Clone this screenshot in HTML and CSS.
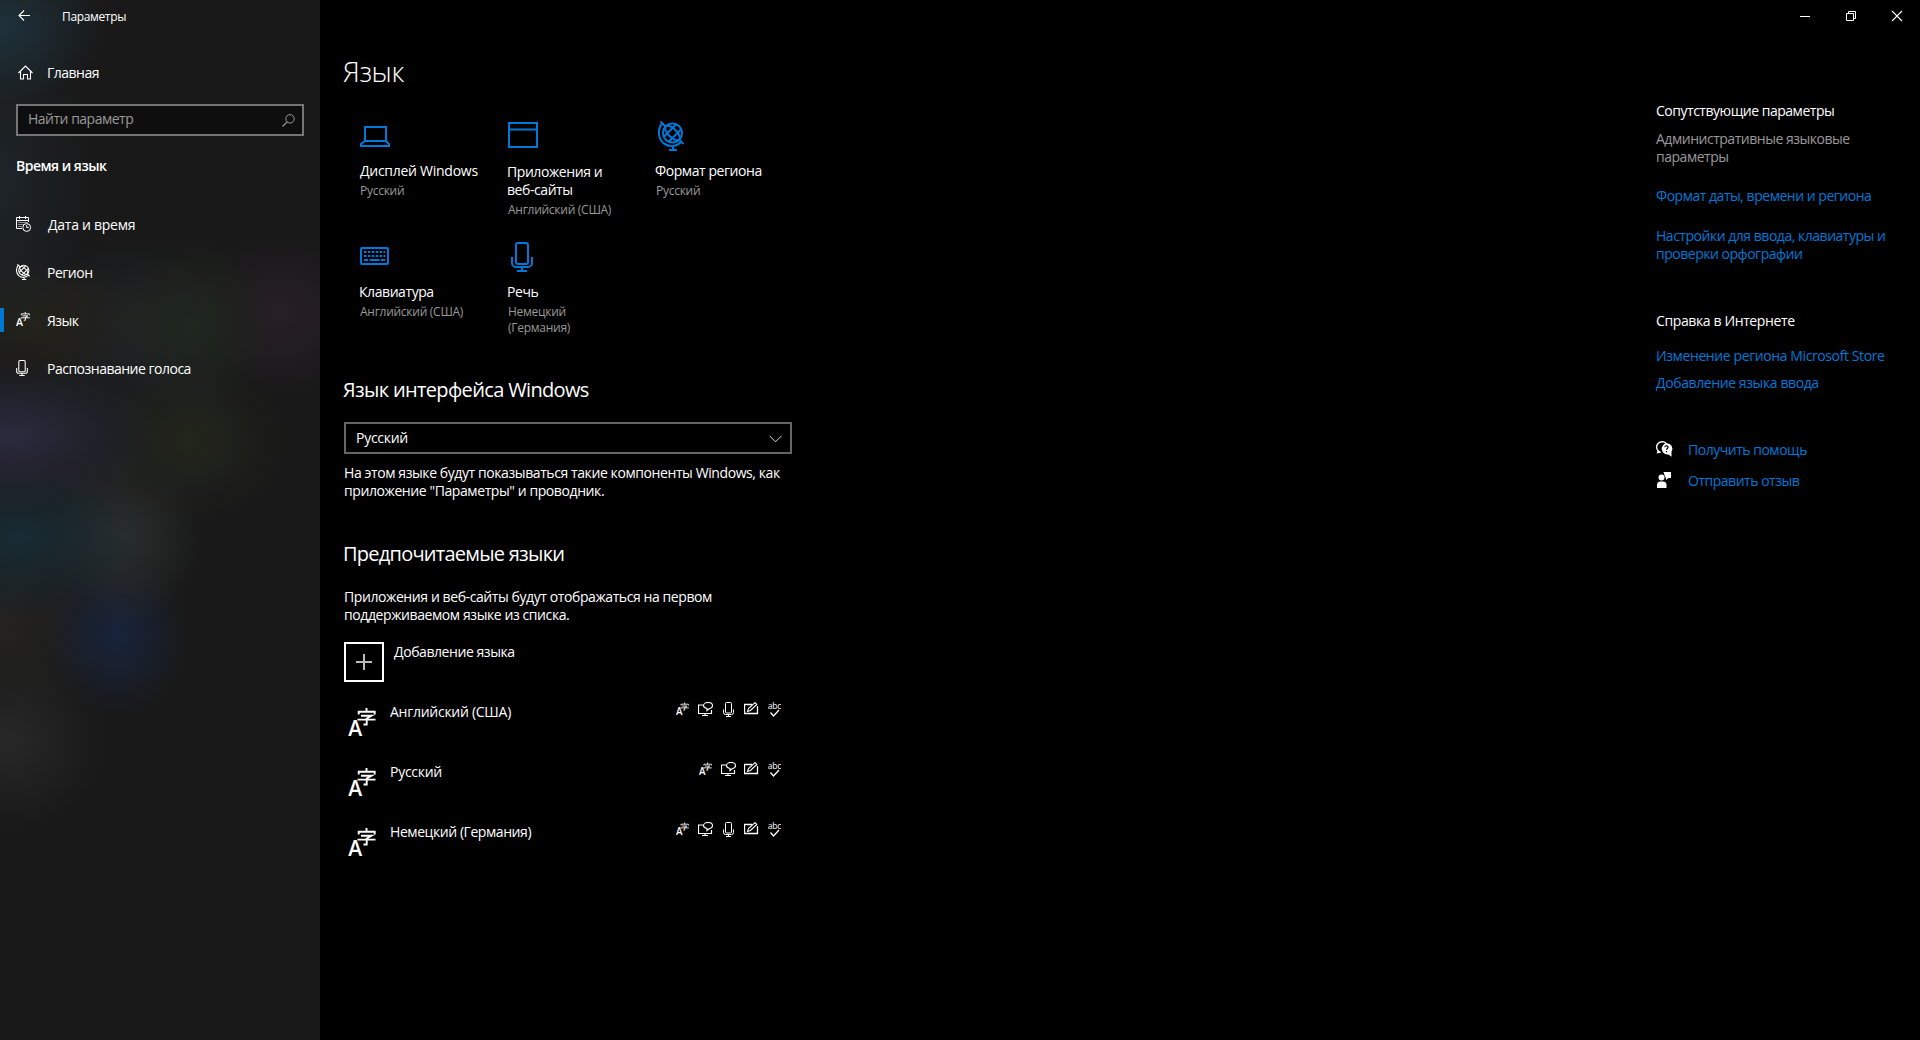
FILE: index.html
```html
<!DOCTYPE html>
<html lang="ru">
<head>
<meta charset="utf-8">
<title>Параметры</title>
<link rel="stylesheet" href="styles.css">
</head>
<body>
<svg class="defs" aria-hidden="true">
  <symbol id="translate" viewBox="0 0 28 28">
    <text class="glyph-a" x="0.200" y="27.500">A</text>
    <path d="M18.5 0v3.5M10.700 6.500V3.700H26.700V6.500M13 7.700H23.500L18.700 10.500V16.500H15.500M9.500 11.600H27.500" fill="none" stroke="currentColor" stroke-width="1.900"/>
  </symbol>
  <symbol id="mic" viewBox="0 0 22 30">
    <rect x="5" y="1" width="12" height="21" rx="2" fill="none" stroke="currentColor" stroke-width="2"/>
    <path d="M1 15v6a4 4 0 0 0 4 4h12a4 4 0 0 0 4-4v-6M11 25v4M6 29h10" fill="none" stroke="currentColor" stroke-width="2"/>
  </symbol>
  <symbol id="globe" viewBox="0 0 26 30">
    <g fill="none" stroke="currentColor" stroke-width="2">
      <circle cx="14.500" cy="12" r="9.500"/>
      <g transform="rotate(-45 14.500 12)"><ellipse cx="14.500" cy="12" rx="4.200" ry="9.500"/><path d="M6 8.500h17M6 15.500h17"/></g>
      <path d="M2.500 .5l5 5M21 18.500l4.500 4.500M3.500 3C-.5 9 0 17 5 21.800c5 4.500 13 4.500 18-.8M15 25v4M11 29h8"/>
    </g>
  </symbol>
  <symbol id="display" viewBox="0 0 15 15">
    <path d="M5 3H.5v8.500h13V8M7 11.500V14M4 13.500h6" fill="none" stroke="currentColor" stroke-width="1.150"/>
    <path d="M10 .5c2.500 0 4.500 1.300 4.500 3S13 6.500 11.500 6.500L9 8.500v-2C6.500 6 5.500 5 5.500 3.500s2-3 4.500-3z" fill="none" stroke="currentColor" stroke-width="1.150"/>
  </symbol>
  <symbol id="pen" viewBox="0 0 15 15">
    <path d="M8 2.500H.5v9h13V4" fill="none" stroke="currentColor" stroke-width="1.300"/>
    <path d="M3.500 9.500l1-3L11 .6l1.800 1.800L6.500 8.500z" fill="none" stroke="currentColor" stroke-width="1.100"/>
  </symbol>
  <symbol id="spell" viewBox="0 0 13 15">
    <text class="glyph-abc" x="-0.300" y="7">abc</text>
    <path d="M2.500 10.500l3 3.500 5.500-6" fill="none" stroke="currentColor" stroke-width="1.300"/>
  </symbol>
</svg>
<div class="window">
  <aside class="side">
    <header class="titlebar">
      <svg class="back" width="12" height="11" viewBox="0 0 12 11"><path d="M12 5.500H.8M6 .5L1 5.500l5 5" fill="none" stroke="#fff" stroke-width="1.100"/></svg>
      <span class="caption">Параметры</span>
    </header>
    <a class="home">
      <svg width="15" height="15" viewBox="0 0 15 15"><path d="M.5 8L7.500 1l7 7M2.500 6.500v7.500h3v-4.500h4v4.500h3V6.500" fill="none" stroke="#fff" stroke-width="1.100"/></svg>
      <span>Главная</span>
    </a>
    <div class="search">
      <span>Найти параметр</span>
      <svg width="13" height="13" viewBox="0 0 13 13"><circle cx="8" cy="4.800" r="4.200" fill="none" stroke="#999"/><path d="M5 8L.5 12.500" stroke="#999" stroke-width="1.100"/></svg>
    </div>
    <h2 class="group">Время и язык</h2>
    <nav>
      <a class="nav-item"><svg width="15" height="16" viewBox="0 0 15 16"><g fill="none" stroke="#fff"><path d="M6 12.500H.5V1.500h12V6M.5 4.500h12M3.500 0v3M9.500 0v3"/><circle cx="10.700" cy="11.500" r="3.900"/><path d="M10.700 9v2.500h2"/></g><path d="M2.500 6.500h9M2.500 8.500h5M2.500 10.500h4" stroke="#fff" stroke-dasharray="1 1"/></svg><span class="loose">Дата и время</span></a>
      <a class="nav-item"><svg width="14" height="16"><use href="#globe"/></svg><span>Регион</span></a>
      <a class="nav-item current"><svg width="14" height="14"><use href="#translate"/></svg><span>Язык</span></a>
      <a class="nav-item"><svg width="12" height="16"><use href="#mic"/></svg><span>Распознавание голоса</span></a>
    </nav>
  </aside>
  <main class="content">
    <h1>Язык</h1>
    <div class="tiles">
      <div class="tile"><div class="pic laptop"><svg width="30" height="21" viewBox="0 0 30 21"><path d="M5 15V1h21v14M5 15h21l3 3v2H1v-2z" fill="none" stroke="currentColor" stroke-width="2"/></svg></div><span class="name loose">Дисплей Windows</span><span class="value">Русский</span></div>
      <div class="tile two-line"><div class="pic apps"><svg width="30" height="26" viewBox="0 0 30 26"><path d="M1 1h28v24H1zM1 7.500h28" fill="none" stroke="currentColor" stroke-width="2"/></svg></div><span class="name">Приложения и<br>веб-сайты</span><span class="value">Английский (США)</span></div>
      <div class="tile"><div class="pic world"><svg width="26" height="30"><use href="#globe"/></svg></div><span class="name">Формат региона</span><span class="value">Русский</span></div>
      <div class="tile"><div class="pic keys"><svg width="29" height="18" viewBox="0 0 29 18"><rect x="1" y="1" width="27" height="16" rx="1" fill="none" stroke="currentColor" stroke-width="2"/><path d="M4 5h21M4 9h21" stroke="currentColor" stroke-width="2" stroke-dasharray="2.500 1.400"/><path d="M4 13h4M9.500 13h10M21 13h4" stroke="currentColor" stroke-width="2"/></svg></div><span class="name">Клавиатура</span><span class="value">Английский (США)</span></div>
      <div class="tile"><div class="pic speech"><svg width="22" height="30"><use href="#mic"/></svg></div><span class="name">Речь</span><span class="value">Немецкий<br>(Германия)</span></div>
    </div>
    <h2 class="section">Язык интерфейса Windows</h2>
    <div class="select"><span class="loose">Русский</span><svg width="13" height="8" viewBox="0 0 13 8"><path d="M.5 .8l6 6 6-6" fill="none" stroke="#ddd"/></svg></div>
    <p class="note">На этом языке будут показываться такие компоненты Windows, как<br>приложение "Параметры" и проводник.</p>
    <h2 class="section preferred">Предпочитаемые языки</h2>
    <p class="note">Приложения и веб-сайты будут отображаться на первом<br>поддерживаемом языке из списка.</p>
    <div class="add"><div class="plus"><svg width="16" height="16" viewBox="0 0 16 16"><path d="M8 0v16M0 8h16" stroke="#bbb" stroke-width="2"/></svg></div><span>Добавление языка</span></div>
    <div class="lang"><svg class="big" width="28" height="28"><use href="#translate"/></svg><span class="loose">Английский (США)</span>
      <div class="features"><svg width="13" height="14"><use href="#translate"/></svg><svg width="15" height="15"><use href="#display"/></svg><svg width="11" height="15"><use href="#mic"/></svg><svg width="15" height="15"><use href="#pen"/></svg><svg width="13" height="15"><use href="#spell"/></svg></div></div>
    <div class="lang"><svg class="big" width="28" height="28"><use href="#translate"/></svg><span class="loose">Русский</span>
      <div class="features"><svg width="13" height="14"><use href="#translate"/></svg><svg width="15" height="15"><use href="#display"/></svg><svg width="15" height="15"><use href="#pen"/></svg><svg width="13" height="15"><use href="#spell"/></svg></div></div>
    <div class="lang"><svg class="big" width="28" height="28"><use href="#translate"/></svg><span>Немецкий (Германия)</span>
      <div class="features"><svg width="13" height="14"><use href="#translate"/></svg><svg width="15" height="15"><use href="#display"/></svg><svg width="11" height="15"><use href="#mic"/></svg><svg width="15" height="15"><use href="#pen"/></svg><svg width="13" height="15"><use href="#spell"/></svg></div></div>
  </main>
  <aside class="related">
    <div class="controls">
      <svg width="10" height="10" viewBox="0 0 10 10"><path d="M0 5.500h10" stroke="#fff"/></svg>
      <svg width="10" height="10" viewBox="0 0 10 10"><path d="M.5 2.500h7v7h-7zM2.500 2.500v-2h7v7h-2" fill="none" stroke="#fff"/></svg>
      <svg width="10" height="10" viewBox="0 0 10 10"><path d="M0 0l10 10M10 0L0 10" stroke="#fff" stroke-width="1.100"/></svg>
    </div>
    <h3>Сопутствующие параметры</h3>
    <p class="muted">Административные языковые<br>параметры</p>
    <a class="link format">Формат даты, времени и региона</a>
    <a class="link input">Настройки для ввода, клавиатуры и<br>проверки орфографии</a>
    <h3 class="help">Справка в Интернете</h3>
    <a class="link store">Изменение региона Microsoft Store</a>
    <a class="link method">Добавление языка ввода</a>
    <a class="action"><svg width="17" height="16" viewBox="0 0 17 16"><path d="M2.500 10.500C-.5 7.500 0 3 3.500 1.300 6.500 0 9.500 1 10.500 3" fill="none" stroke="#fff" stroke-width="1.400"/><path d="M.5 12.500l5-1L2 9zM10.500 2.200a5.500 5.500 0 0 1 5 8.500v5L12.500 13.500a5.500 5.500 0 1 1-2-11.300z" fill="#fff"/><path d="M8.800 6.300c.2-2.200 3.600-1.800 3.200.2-.3 1-1.500 1-1.500 2.300M10.500 10v1.200" fill="none" stroke="#000" stroke-width="1.200"/></svg><span>Получить помощь</span></a>
    <a class="action"><svg width="17" height="16" viewBox="0 0 17 16"><circle cx="5.500" cy="5.500" r="3" fill="#fff"/><path d="M1 16v-3.500a3.500 3.500 0 0 1 3.500-3H7a3.500 3.500 0 0 1 3.500 3V16zM7.500 0H15v6h-2.500l-2.500 2V6L9 4.500z" fill="#fff"/></svg><span>Отправить отзыв</span></a>
  </aside>
</div>
</body>
</html>
```
FILE: styles.css
```css
* { box-sizing: border-box; }
body {
  margin: 0;
  background: #000;
  color: #fff;
  font: 14px/18px "Open Sans", "Noto Sans", sans-serif;
  letter-spacing: -0.43px;
}
h1, h2, h3, p { margin: 0; font-weight: 400; font-size: inherit; }
.defs { position: absolute; width: 0; height: 0; }
.glyph-a { font: 600 21px "Open Sans", sans-serif; fill: currentColor; letter-spacing: 0; }
.glyph-abc { font: 8.5px "Open Sans", sans-serif; fill: currentColor; letter-spacing: -0.2px; }
svg { display: block; flex: none; overflow: visible; }
.loose { letter-spacing: -0.27px; }
.window { display: flex; height: 1040px; overflow: hidden; white-space: nowrap; }

.side {
  width: 320px;
  flex: none;
  letter-spacing: -0.5px;
  background:
    radial-gradient(ellipse 105px 80px at 0 25px, #1f323b, transparent),
    radial-gradient(ellipse 90px 190px at 0 180px, #1d2428, transparent),
    radial-gradient(ellipse 130px 65px at 30px 320px, #242219, transparent),
    radial-gradient(ellipse 85px 85px at 190px 325px, #1f271e, transparent),
    radial-gradient(ellipse 95px 80px at 280px 315px, #271f26, transparent),
    radial-gradient(ellipse 110px 90px at 130px 330px, #202328, transparent),
    radial-gradient(ellipse 150px 75px at 10px 435px, #2a2b3e, transparent),
    radial-gradient(ellipse 95px 80px at 190px 440px, #23261c, transparent),
    radial-gradient(ellipse 130px 80px at 20px 537px, #182c34, transparent),
    radial-gradient(ellipse 80px 90px at 122px 535px, #2c2e2e, transparent),
    radial-gradient(ellipse 70px 80px at 117px 635px, #18243c, transparent),
    radial-gradient(ellipse 110px 90px at 0 630px, #242322, transparent),
    radial-gradient(ellipse 100px 90px at 5px 740px, #282828, transparent),
    #191919;
}
.titlebar { display: flex; height: 32px; padding: 10px 0 0 18px; }
.caption { margin: -1px 0 0 32px; font-size: 12px; line-height: 16px; letter-spacing: -0.35px; }
.home { display: flex; gap: 14px; height: 48px; margin-top: 24px; padding: 9px 0 0 18px; }
.home span { margin-top: -1px; }
.search {
  display: flex;
  justify-content: space-between;
  width: 288px;
  height: 32px;
  margin-left: 16px;
  padding: 4px 7px 0 10px;
  border: 2px solid #767676;
  background: #0e0e0e;
  color: #999;
}
.search svg { margin-top: 4px; }
.group { padding: 21px 0 0 16px; font-weight: 600; height: 64px; }
.nav-item { display: grid; grid-template-columns: 31px 1fr; height: 48px; padding: 16px 0 0 16px; }
.nav-item svg { justify-self: start; }
.nav-item .loose { padding-left: 1px; }
.nav-item.current { background: linear-gradient(#0078d7, #0078d7) 0 12px / 4px 24px no-repeat; }

.content { width: 1336px; flex: none; padding: 53px 0 0 23px; }
h1 { font-size: 28px; line-height: 36px; font-weight: 300; }
.tiles { display: grid; grid-template-columns: repeat(3, 148px); grid-auto-rows: 121px; margin: 32px 0 0 17px; }
.pic { height: 30px; margin-bottom: 11px; color: #0078d7; }
.laptop, .keys { padding-top: 5px; }
.apps { padding-top: 1px; }
.world { padding-left: 2px; }
.speech { padding-left: 3px; }
.name, .value { display: block; }
.name { margin-left: -1px; }
.name.loose { margin-left: 0; }
.two-line .pic { margin-bottom: 12px; }
.value { margin-top: 3px; font-size: 12px; line-height: 16px; color: #999; letter-spacing: -0.27px; }
.section { font-size: 20px; line-height: 28px; margin-top: 13px; letter-spacing: -0.65px; }
.select {
  display: flex;
  justify-content: space-between;
  width: 448px;
  height: 32px;
  margin: 18px 0 0 1px;
  padding: 5px 8px 0 10px;
  border: 2px solid #666;
}
.select svg { margin-top: 6px; }
.note { margin: 10px 0 0 1px; letter-spacing: -0.41px; }
.preferred { margin-top: 40px; letter-spacing: -0.75px; }
.preferred + .note { margin-top: 20px; }
.add { display: flex; gap: 10px; margin: 18px 0 0 1px; height: 61px; }
.add span { margin-top: 1px; }
.plus { display: grid; place-items: center; width: 40px; height: 40px; border: 2px solid #fff; }
.lang { display: flex; width: 448px; height: 60px; margin-left: 1px; }
.big { margin: 5px 14px 0 4px; }
.features { display: grid; grid-auto-flow: column; grid-auto-columns: 23px; justify-items: center; align-items: start; margin: -1px 6px 0 auto; }

.related { width: 264px; flex: none; letter-spacing: -0.48px; }
.controls { display: flex; gap: 36px; height: 102px; padding: 11px 0 0 144px; }
.muted { margin-top: 10px; color: #999; }
.link { display: block; color: #0078d7; }
.format { margin-top: 21px; }
.input { margin-top: 22px; }
.help { margin-top: 49px; letter-spacing: -0.38px; }
.store { margin-top: 17px; letter-spacing: -0.4px; }
.method { margin-top: 9px; margin-bottom: 49px; letter-spacing: -0.4px; }
.action { display: grid; grid-template-columns: 32px 1fr; height: 31px; color: #0078d7; }
```
